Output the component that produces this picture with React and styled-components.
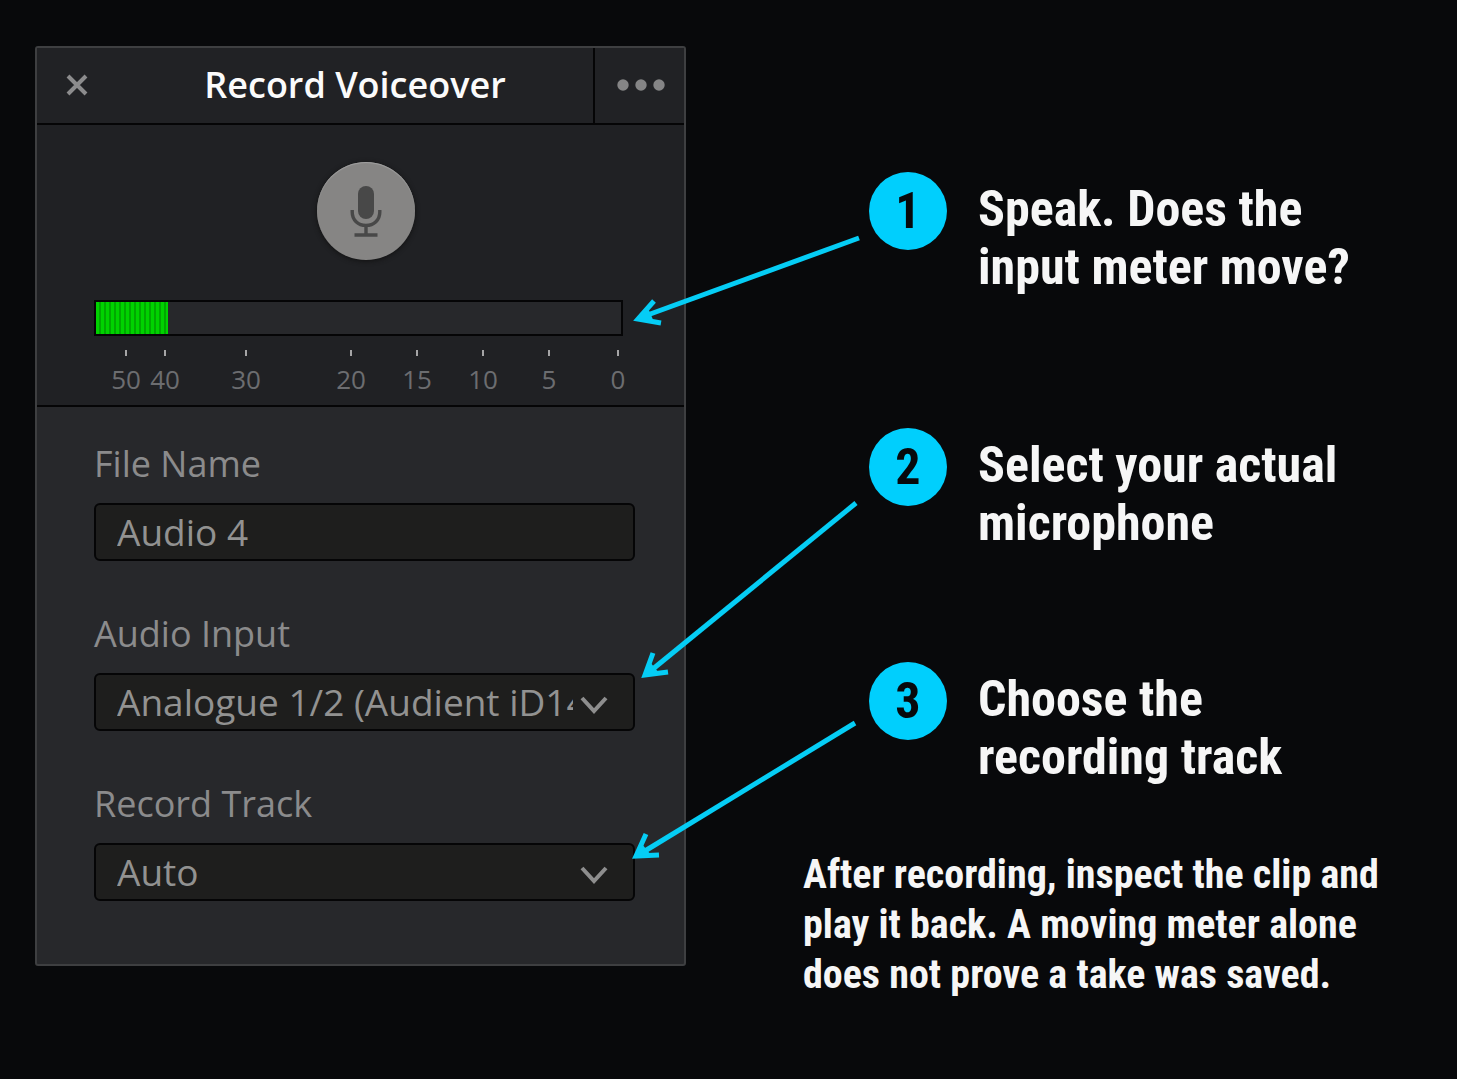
import React, { useState } from "react";
import styled, { createGlobalStyle } from "styled-components";

const GlobalStyle = createGlobalStyle`
  * {
    box-sizing: border-box;
  }
  body {
    margin: 0;
    background: #08090b;
  }
`;

const ticks = [50, 40, 30, 20, 15, 10, 5, 0];

const Chevron = () => (
  <ChevronIcon viewBox="0 0 28 18" aria-hidden="true">
    <path d="M2 2L14 15L26 2" />
  </ChevronIcon>
);

const App = () => {
  const [fileName, setFileName] = useState("Audio 4");
  const [level] = useState(13.8);

  return (
    <Page>
      <GlobalStyle />
      <Panel>
        <Header>
          <CloseBtn type="button" aria-label="Close">
            <svg width="22" height="22" viewBox="0 0 22 22">
              <path d="M2 2L20 20M20 2L2 20" stroke="#8c8c8d" strokeWidth="4" />
            </svg>
          </CloseBtn>
          <Title>Record Voiceover</Title>
          <MenuBtn type="button" aria-label="Options">
            <svg width="48" height="12" viewBox="0 0 48 12" fill="#858586">
              <circle cx="6" cy="6" r="5.7" />
              <circle cx="24" cy="6" r="5.7" />
              <circle cx="42" cy="6" r="5.7" />
            </svg>
          </MenuBtn>
        </Header>

        <MeterSection>
          <MicBtn type="button" aria-label="Record">
            <svg width="32" height="52" viewBox="0 0 32 52" fill="none">
              <rect x="8" y="1" width="16" height="33" rx="8" fill="#484848" />
              <path
                d="M2.2 25V27C2.2 35 8 40.4 16 40.4C24 40.4 29.8 35 29.8 27V25M16 40V49M4.5 50H27.5"
                stroke="#484848"
                strokeWidth="3.4"
              />
            </svg>
          </MicBtn>
          <Meter>
            <Level style={{ width: `${level}%` }} />
          </Meter>
          <Scale>
            {ticks.map((tick) => (
              <Tick key={tick}>{tick}</Tick>
            ))}
          </Scale>
        </MeterSection>

        <Form>
          <Field>
            <Label htmlFor="file-name">File Name</Label>
            <Input
              id="file-name"
              value={fileName}
              onChange={(e) => setFileName(e.target.value)}
            />
          </Field>
          <Field>
            <Label htmlFor="audio-input">Audio Input</Label>
            <SelectBox>
              <Select id="audio-input">
                <option>Analogue 1/2 (Audient iD14)</option>
              </Select>
              <Chevron />
            </SelectBox>
          </Field>
          <Field>
            <Label htmlFor="record-track">Record Track</Label>
            <SelectBox>
              <Select id="record-track">
                <option>Auto</option>
              </Select>
              <Chevron />
            </SelectBox>
          </Field>
        </Form>
      </Panel>

      <Guide>
        <Steps>
          <Step $gap={132}>
            <Badge>1</Badge>
            <StepText>
              Speak. Does the
              <br />
              input meter move?
            </StepText>
          </Step>
          <Step $gap={110}>
            <Badge>2</Badge>
            <StepText>
              Select your actual
              <br />
              microphone
            </StepText>
          </Step>
          <Step $gap={64}>
            <Badge>3</Badge>
            <StepText>
              Choose the
              <br />
              recording track
            </StepText>
          </Step>
        </Steps>
        <Note>
          After recording, inspect the clip and
          <br />
          play it back. A moving meter alone
          <br />
          does not prove a take was saved.
        </Note>
      </Guide>

      <Arrows viewBox="0 0 1457 1079" preserveAspectRatio="none" aria-hidden="true">
        <path d="M859 238L642 317" />
        <path d="M654 301L638 319L661 323" />
        <path className="tip" d="M638 319L648 308L654 322Z" />
        <path d="M856 503L648 673" />
        <path d="M653 653L645 675L668 672" />
        <path className="tip" d="M645 675L650 662L659 673Z" />
        <path d="M855 723L640 854" />
        <path d="M646 834L636 856L659 855" />
        <path className="tip" d="M636 856L642 844L651 855Z" />
      </Arrows>
    </Page>
  );
};

const Page = styled.main`
  position: relative;
  display: grid;
  grid-template-columns: minmax(480px, 651px) minmax(0, 1fr);
  column-gap: 117px;
  align-items: start;
  min-height: 100vh;
  padding: 46px 35px;
  font-family: "Open Sans", "Noto Sans", sans-serif;
`;

const Panel = styled.section`
  border: 2px solid #3e3f41;
  border-radius: 3px;
  background: #27282b;
`;

const Header = styled.header`
  display: flex;
  height: 77px;
  padding-bottom: 2px;
  background: #212225;
  border-bottom: 2px solid #050506;
`;

const IconBtn = styled.button`
  display: flex;
  align-items: center;
  justify-content: center;
  padding: 0;
  border: none;
  background: none;
  cursor: pointer;
`;

const CloseBtn = styled(IconBtn)`
  width: 80px;
`;

const MenuBtn = styled(IconBtn)`
  width: 91px;
  height: 75px;
  padding: 0 0 2px 2px;
  border-left: 2px solid #050506;
`;

const Title = styled.h1`
  flex: 1;
  margin: 0;
  font-size: 36px;
  font-weight: 600;
  line-height: 73px;
  text-align: center;
  color: #fbfbfb;
`;

const MeterSection = styled.div`
  display: flex;
  flex-direction: column;
  padding: 37px 61px 10px 57px;
  background: #202124;
  border-bottom: 2px solid #050506;
`;

const MicBtn = styled(IconBtn)`
  align-self: center;
  width: 98px;
  height: 98px;
  margin: 0 0 40px 14px;
  border-radius: 50%;
  background: #868584;
  box-shadow: 0 1px 5px #111, inset 0 1px 1px #a0a0a0;
`;

const Meter = styled.div`
  height: 36px;
  border: 2px solid #050506;
  background: #27282b;
`;

const Level = styled.div`
  height: 100%;
  background: repeating-linear-gradient(90deg, #00d200 0 3px, #00a800 3px 5px);
`;

const Scale = styled.div`
  display: grid;
  grid-template-columns: 32fr 39fr 81fr 105fr 66fr 66fr 66fr 69fr 5fr;
  margin-top: 14px;
`;

const Tick = styled.span`
  display: flex;
  flex-direction: column;
  align-items: center;
  justify-self: end;
  width: 0;
  font-size: 26px;
  line-height: 32px;
  color: #6c6d70;

  &::before {
    content: "";
    width: 2px;
    height: 6px;
    margin-bottom: 7px;
    background: #a5a5a6;
  }
`;

const Form = styled.form`
  display: flex;
  flex-direction: column;
  gap: 48px;
  padding: 32px 49px 63px 57px;
`;

const Field = styled.div`
  display: flex;
  flex-direction: column;
  gap: 14px;
`;

const Label = styled.label`
  font-size: 36px;
  line-height: 50px;
  color: #8b8b8c;
`;

const Input = styled.input`
  width: 100%;
  height: 58px;
  padding: 0 21px 2px;
  border: 2px solid #050506;
  border-radius: 6px;
  outline: none;
  background: #1e1e1d;
  color: #929291;
  font-family: inherit;
  font-size: 37px;
`;

const SelectBox = styled.div`
  position: relative;
`;

const Select = styled(Input).attrs({ as: "select" })`
  display: block;
  padding-right: 60px;
  appearance: none;
`;

const ChevronIcon = styled.svg`
  position: absolute;
  top: 23px;
  right: 27px;
  width: 28px;
  height: 18px;
  fill: none;
  stroke: #8e8e8e;
  stroke-width: 4;
  pointer-events: none;
`;

const Guide = styled.section`
  padding-top: 126px;
  font-family: "Roboto Condensed", Roboto, "Liberation Sans", sans-serif;
  font-weight: 700;
  color: #f6f6f6;
`;

const Steps = styled.ol`
  margin: 0;
  padding: 0 0 0 66px;
  list-style: none;
`;

const Step = styled.li`
  display: flex;
  align-items: flex-start;
  gap: 31px;
  margin-bottom: ${(props) => props.$gap}px;
`;

const Badge = styled.span`
  flex-shrink: 0;
  width: 78px;
  height: 78px;
  border-radius: 50%;
  background: #00cffd;
  color: #07090c;
  font-size: 50px;
  line-height: 78px;
  text-align: center;
`;

const StepText = styled.p`
  margin: 0;
  padding-top: 8px;
  font-size: 50px;
  line-height: 58px;
  white-space: nowrap;
`;

const Note = styled.p`
  margin: 0;
  font-size: 40px;
  line-height: 50px;
  white-space: nowrap;
`;

const Arrows = styled.svg`
  position: absolute;
  inset: 0;
  width: 100%;
  height: 100%;
  fill: none;
  stroke: #05cdf5;
  stroke-width: 5;
  pointer-events: none;

  .tip {
    fill: #05cdf5;
    stroke: none;
  }
`;

export default App;
